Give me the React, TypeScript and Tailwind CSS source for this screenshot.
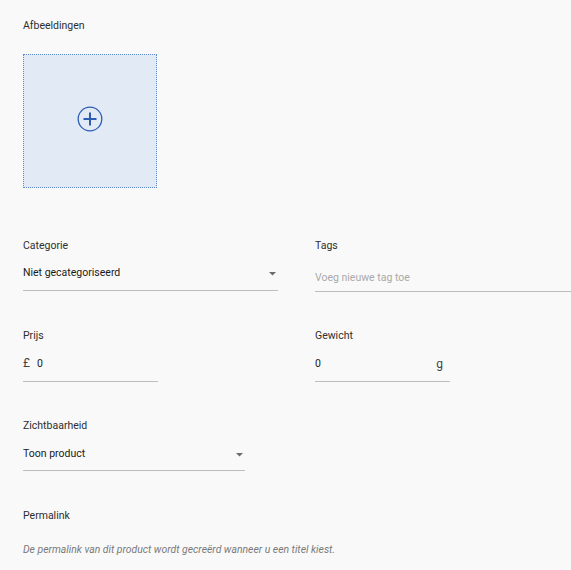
import React from 'react';

function Caret() {
  return (
    <svg width="7" height="4" viewBox="0 0 7 4" className="shrink-0">
      <path d="M0 0 L7 0 L3.5 3.5 Z" fill="#6b6b6b" />
    </svg>
  );
}

function Label({ children }: { children: React.ReactNode }) {
  return <div className="h-[13px] text-[10.5px] leading-[13px] text-[#2e2e2e]">{children}</div>;
}

export default function App() {
  return (
    <div className="min-h-[570px] w-[571px] overflow-hidden bg-[#f9f9f9] pl-[23px] pt-[19px] font-['Roboto',sans-serif]">
      <Label>Afbeeldingen</Label>
      <div className="mt-[22px] flex h-[134px] w-[134px] items-center justify-center border border-dotted border-[#5e8ccc] bg-[#e2eaf6]">
        <svg width="26" height="26" viewBox="0 0 26 26" className="mb-[4px]">
          <circle cx="13" cy="13" r="11.8" fill="none" stroke="#2d5cb5" strokeWidth="1.3" />
          <path d="M13 6.5 V19.5 M6.5 13 H19.5" stroke="#2d5cb5" strokeWidth="2" />
        </svg>
      </div>

      <div className="mt-[51px] grid grid-cols-[292px_1fr]">
        <div className="w-[255px]">
          <Label>Categorie</Label>
          <div className="mt-[14px] flex h-[13px] items-center justify-between text-[10.5px] leading-[13px] text-[#1a1a1a]">
            <span>Niet gecategoriseerd</span>
            <span className="mr-[2px] mt-[3px]"><Caret /></span>
          </div>
          <div className="mt-[11px] h-px bg-[#bdbdbd]" />
        </div>
        <div>
          <Label>Tags</Label>
          <div className="mt-[19px] h-[13px] text-[10.5px] leading-[13px] text-[#a9a9a9]">Voeg nieuwe tag toe</div>
          <div className="mt-[7px] h-px bg-[#bdbdbd]" />
        </div>
      </div>

      <div className="mt-[37px] grid grid-cols-[292px_1fr]">
        <div className="w-[135px]">
          <Label>Prijs</Label>
          <div className="mt-[15px] flex h-[13px] items-center text-[10.5px] leading-[13px] text-[#1a1a1a]">
            <span className="text-[12px] text-[#444]">£</span>
            <span className="ml-[7px]">0</span>
          </div>
          <div className="mt-[11px] h-px bg-[#bdbdbd]" />
        </div>
        <div className="w-[135px]">
          <Label>Gewicht</Label>
          <div className="mt-[15px] flex h-[13px] items-center justify-between text-[10.5px] leading-[13px] text-[#1a1a1a]">
            <span>0</span>
            <span className="mr-[7px] mt-[2px] text-[12px] text-[#444]">g</span>
          </div>
          <div className="mt-[11px] h-px bg-[#bdbdbd]" />
        </div>
      </div>

      <div className="mt-[37px] w-[222px]">
        <Label>Zichtbaarheid</Label>
        <div className="mt-[15px] flex h-[13px] items-center justify-between text-[10.5px] leading-[13px] text-[#1a1a1a]">
          <span>Toon product</span>
          <span className="mr-[2px] mt-[3px]"><Caret /></span>
        </div>
        <div className="mt-[10px] h-px bg-[#bdbdbd]" />
      </div>

      <div className="mt-[38px]">
        <Label>Permalink</Label>
        <div className="mt-[21px] text-[10.4px] italic leading-[13px] text-[#7a7a7a]">
          De permalink van dit product wordt gecreërd wanneer u een titel kiest.
        </div>
      </div>
    </div>
  );
}
